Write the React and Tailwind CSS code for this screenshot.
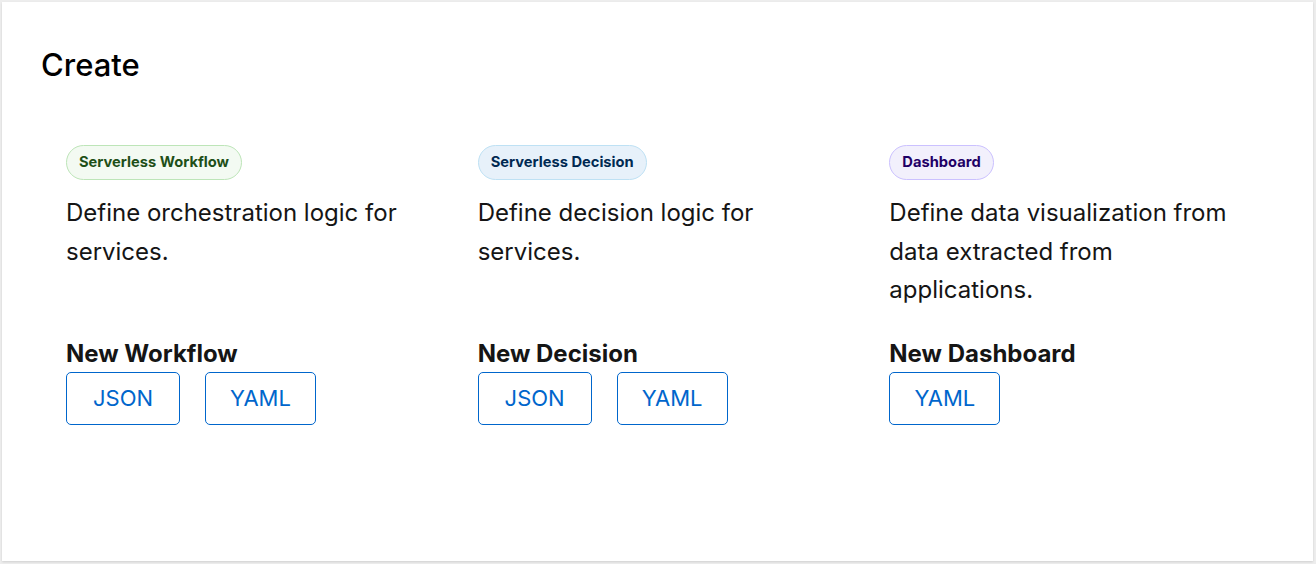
import React from 'react';

const labelStyles = {
  green: 'bg-[#f3faf2] border-[#bde5b8] text-[#1e4f18]',
  blue: 'bg-[#e7f1fa] border-[#bee1f4] text-[#002952]',
  purple: 'bg-[#f2f0fc] border-[#cbc1ff] text-[#1f0066]',
};

// largeur des boutons selon le format
const buttonWidths = {
  JSON: 'w-[114px]',
  YAML: 'w-[111px]',
};

const cards = [
  {
    label: 'Serverless Workflow',
    color: 'green',
    description: 'Define orchestration logic for services.',
    title: 'New Workflow',
    buttons: ['JSON', 'YAML'],
  },
  {
    label: 'Serverless Decision',
    color: 'blue',
    description: 'Define decision logic for services.',
    title: 'New Decision',
    buttons: ['JSON', 'YAML'],
  },
  {
    label: 'Dashboard',
    color: 'purple',
    description: 'Define data visualization from data extracted from applications.',
    title: 'New Dashboard',
    buttons: ['YAML'],
  },
];

const CreateCard = ({ card }) => (
  <div className="flex flex-col items-start">
    <span
      className={`inline-flex items-center h-[35px] px-[12px] rounded-full border text-[14.7px] font-bold ${labelStyles[card.color]}`}
    >
      {card.label}
    </span>
    <p className="mt-[14px] w-[360px] min-h-[116px] text-[24px] leading-[38.5px] text-[#151515]">
      {card.description}
    </p>
    <h3 className="mt-[29px] text-[24px] leading-[30px] font-bold text-[#151515]">{card.title}</h3>
    <div className="mt-[3px] flex gap-[25px]">
      {card.buttons.map((b) => (
        <button
          key={b}
          className={`h-[53px] ${buttonWidths[b]} border border-[#0066cc] rounded-[5px] text-[22px] text-[#0066cc] bg-white`}
        >
          {b}
        </button>
      ))}
    </div>
  </div>
);

export default function App() {
  return (
    <div
      className="w-[1316px] h-[564px] bg-[#ededed] pt-[2px] pl-[2px] pr-[3px] pb-[3px]"
      style={{ fontFamily: 'Inter, "Noto Sans", sans-serif' }}
    >
      <div className="h-full bg-white shadow-[0_1px_2px_rgba(0,0,0,0.12)] pl-[39px] pt-[43px]">
        <h2 className="text-[31px] leading-[40px] font-medium text-black">Create</h2>
        {/* cartes */}
        <div className="mt-[60px] ml-[25px] w-[1211px] grid grid-cols-3 gap-x-[24px]">
          {cards.map((card) => (
            <CreateCard key={card.label} card={card} />
          ))}
        </div>
      </div>
    </div>
  );
}
